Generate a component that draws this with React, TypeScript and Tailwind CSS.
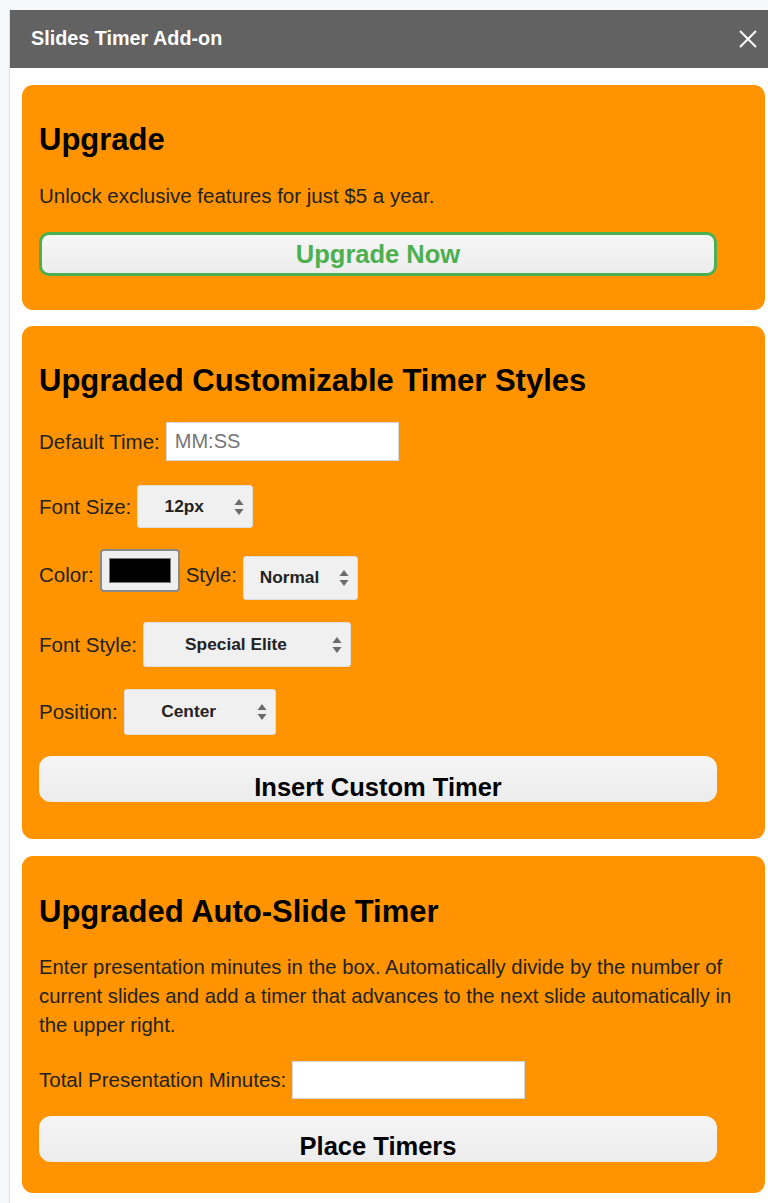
import { ReactNode } from "react";

const font = { fontFamily: '"Liberation Sans", Arial, sans-serif' };

const Arrows = () => (
  <svg width="10" height="18" viewBox="0 0 10 18" className="shrink-0">
    <path d="M5 1 L9.5 7 H0.5 Z" fill="#6b6b6b" />
    <path d="M5 17 L9.5 11 H0.5 Z" fill="#6b6b6b" />
  </svg>
);

const Select = ({ value, width, height }: { value: string; width: string; height: string }) => (
  <div
    className={`${width} ${height} flex items-center bg-[#f0f0f0] border border-[#dedede] rounded-[3px] pr-[8px] shrink-0`}
  >
    <span className="flex-1 text-center text-[17.3px] font-bold text-[#222] pr-[4px]">
      {value}
    </span>
    <Arrows />
  </div>
);

const Label = ({ children }: { children: ReactNode }) => (
  <span className="text-[20.5px] text-[#222] leading-[28px] mr-[6px]">
    {children}
  </span>
);

const Card = ({ children, className }: { children: ReactNode; className: string }) => (
  <div className={`bg-[#ff9400] rounded-[11px] px-[17px] ${className}`}>
    {children}
  </div>
);

const GrayButton = ({ children }: { children: ReactNode }) => (
  <button className="w-[678px] h-[46px] bg-gradient-to-b from-[#f5f5f5] to-[#ececec] rounded-[12px] text-[25.5px] font-bold text-black leading-[28px] pt-[15px]">
    {children}
  </button>
);

export default function App() {
  return (
    <div style={font} className="bg-[#f7f8fa] pt-[10px] pl-[9px] min-h-[1203px]">
      <div className="bg-white border-l border-[#dcdde0] min-h-[1193px]">
        <div className="h-[58px] bg-[#626262] flex items-center justify-between pl-[21px] pr-[10px]">
          <span className="text-white text-[19.8px] font-bold">Slides Timer Add-on</span>
          <svg width="20" height="20" viewBox="0 0 20 20">
            <path d="M2 2 L18 18 M18 2 L2 18" stroke="white" strokeWidth="2" />
          </svg>
        </div>

        <div className="pl-[12px] pr-[3px] pt-[17px] flex flex-col">
          <Card className="pt-[38px] pb-[34px]">
            <h2 className="text-[31px] font-bold leading-[34px] text-black">Upgrade</h2>
            <p className="mt-[25px] text-[20.5px] leading-[28px] text-[#222]">
              Unlock exclusive features for just $5 a year.
            </p>
            <button className="mt-[22px] w-[678px] h-[44px] border-[3px] border-[#4caf50] bg-gradient-to-b from-[#f6f6f6] to-[#ededed] rounded-[10px] text-[25.5px] font-bold text-[#4caf50]">
              Upgrade Now
            </button>
          </Card>

          <Card className="mt-[16px] pt-[38px] pb-[36px]">
            <h2 className="text-[31px] font-bold leading-[34px] text-black">
              Upgraded Customizable Timer Styles
            </h2>
            <div className="mt-[24px] flex items-center">
              <Label>Default Time:</Label>
              <input
                placeholder="MM:SS"
                className="w-[233px] h-[39px] bg-white border border-[#d6d6d6] px-[8px] text-[20px] placeholder:text-[#767676] outline-none"
              />
            </div>
            <div className="mt-[24px] flex items-center">
              <Label>Font Size:</Label>
              <Select value="12px" width="w-[116px]" height="h-[43px]" />
            </div>
            <div className="mt-[21px] flex items-center h-[51px]">
              <Label>Color:</Label>
              <div className="self-start w-[80px] h-[43px] bg-[#efefef] border-2 border-[#8a8a8a] rounded-[4px] flex items-center justify-center mr-[6px]">
                <div className="w-[62px] h-[25px] bg-black border border-[#777]" />
              </div>
              <Label>Style:</Label>
              <div className="self-end">
                <Select value="Normal" width="w-[115px]" height="h-[44px]" />
              </div>
            </div>
            <div className="mt-[22px] flex items-center">
              <Label>Font Style:</Label>
              <Select value="Special Elite" width="w-[208px]" height="h-[45px]" />
            </div>
            <div className="mt-[22px] flex items-center">
              <Label>Position:</Label>
              <Select value="Center" width="w-[152px]" height="h-[46px]" />
            </div>
            <div className="mt-[21px]">
              <GrayButton>Insert Custom Timer</GrayButton>
            </div>
          </Card>

          <Card className="mt-[17px] pt-[39px] pb-[31px]">
            <h2 className="text-[31px] font-bold leading-[34px] text-black">
              Upgraded Auto-Slide Timer
            </h2>
            <p className="mt-[24px] text-[20.3px] leading-[29px] text-[#222]">
              Enter presentation minutes in the box. Automatically divide by the number of
              current slides and add a timer that advances to the next slide automatically in
              the upper right.
            </p>
            <div className="mt-[21px] flex items-center">
              <Label>Total Presentation Minutes:</Label>
              <input className="w-[233px] h-[38px] bg-white border border-[#d6d6d6] px-[8px] text-[20px] outline-none" />
            </div>
            <div className="mt-[17px]">
              <GrayButton>Place Timers</GrayButton>
            </div>
          </Card>
        </div>
      </div>
    </div>
  );
}
